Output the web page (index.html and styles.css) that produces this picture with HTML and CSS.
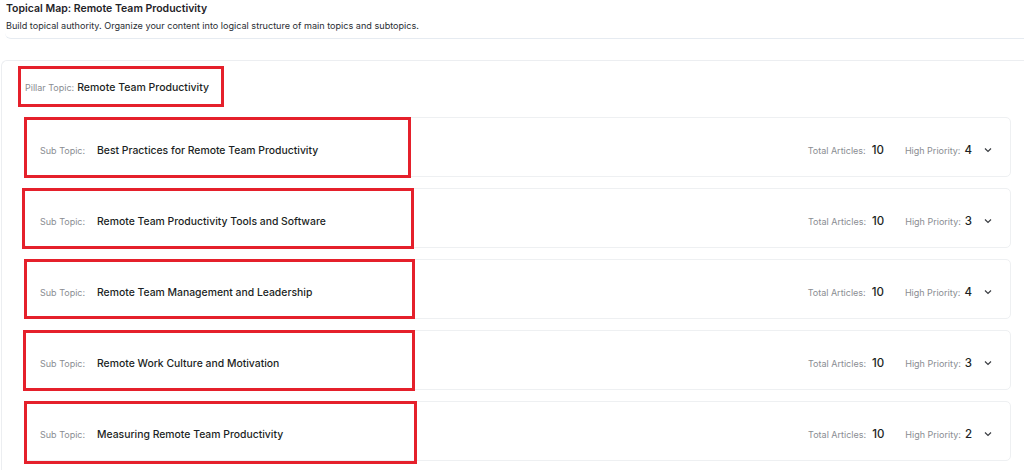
FILE: index.html
```html
<!DOCTYPE html>
<html lang="en">

<head>
    <meta charset="UTF-8">
    <meta name="viewport" content="width=device-width, initial-scale=1.0">
    <title>Topical Map</title>
    <link rel="stylesheet" href="styles.css">
</head>

<body>

    <header class="page-head">
        <h1>Topical Map: Remote Team Productivity</h1>
        <p>Build topical authority. Organize your content into logical structure of main topics and subtopics.</p>
    </header>

    <div class="map-card">
        <div class="pillar">
            <span class="label">Pillar Topic:</span>
            <span class="pillar-name">Remote Team Productivity</span>
            <span class="mark"></span>
        </div>

        <div class="sub-list">
            <div class="sub-card">
                <div class="sub-main">
                    <span class="label sub-label">Sub Topic:</span>
                    <span class="sub-name">Best Practices for Remote Team Productivity</span>
                </div>
                <div class="sub-stats">
                    <span class="label">Total Articles:</span><span class="val total">10</span>
                    <span class="label stat-gap">High Priority:</span><span class="val">4</span>
                    <svg class="chevron" viewBox="0 0 10 10"><polyline points="2,3.5 5,6.5 8,3.5" /></svg>
                </div>
                <span class="mark mark-1"></span>
            </div>

            <div class="sub-card">
                <div class="sub-main">
                    <span class="label sub-label">Sub Topic:</span>
                    <span class="sub-name">Remote Team Productivity Tools and Software</span>
                </div>
                <div class="sub-stats">
                    <span class="label">Total Articles:</span><span class="val total">10</span>
                    <span class="label stat-gap">High Priority:</span><span class="val">3</span>
                    <svg class="chevron" viewBox="0 0 10 10"><polyline points="2,3.5 5,6.5 8,3.5" /></svg>
                </div>
                <span class="mark mark-2"></span>
            </div>

            <div class="sub-card">
                <div class="sub-main">
                    <span class="label sub-label">Sub Topic:</span>
                    <span class="sub-name">Remote Team Management and Leadership</span>
                </div>
                <div class="sub-stats">
                    <span class="label">Total Articles:</span><span class="val total">10</span>
                    <span class="label stat-gap">High Priority:</span><span class="val">4</span>
                    <svg class="chevron" viewBox="0 0 10 10"><polyline points="2,3.5 5,6.5 8,3.5" /></svg>
                </div>
                <span class="mark mark-3"></span>
            </div>

            <div class="sub-card">
                <div class="sub-main">
                    <span class="label sub-label">Sub Topic:</span>
                    <span class="sub-name">Remote Work Culture and Motivation</span>
                </div>
                <div class="sub-stats">
                    <span class="label">Total Articles:</span><span class="val total">10</span>
                    <span class="label stat-gap">High Priority:</span><span class="val">3</span>
                    <svg class="chevron" viewBox="0 0 10 10"><polyline points="2,3.5 5,6.5 8,3.5" /></svg>
                </div>
                <span class="mark mark-4"></span>
            </div>

            <div class="sub-card">
                <div class="sub-main">
                    <span class="label sub-label">Sub Topic:</span>
                    <span class="sub-name">Measuring Remote Team Productivity</span>
                </div>
                <div class="sub-stats">
                    <span class="label">Total Articles:</span><span class="val total">10</span>
                    <span class="label stat-gap">High Priority:</span><span class="val">2</span>
                    <svg class="chevron" viewBox="0 0 10 10"><polyline points="2,3.5 5,6.5 8,3.5" /></svg>
                </div>
                <span class="mark mark-5"></span>
            </div>
        </div>
    </div>

</body>

</html>
```

FILE: styles.css
```css
* {
    box-sizing: border-box;
    font-family: Inter, "Noto Sans", sans-serif;
}

body {
    margin: 0;
    padding: 0;
    background-color: #ffffff;
    color: #1c1f24;
    overflow: hidden;
}

/* page header */
.page-head {
    margin-left: 5px;
    padding: 1px 0 6px 1px;
    border-bottom: 1px solid #e6ebf1;
    border-bottom-left-radius: 6px;
}

.page-head h1 {
    margin: 0;
    font-size: 10.5px;
    font-weight: 600;
    line-height: 15px;
    color: #1f2328;
}

.page-head p {
    margin: 3px 0 0;
    font-size: 9.1px;
    line-height: 13px;
    color: #2a2e33;
}

/* main card */
.map-card {
    margin: 21px 0 0 1px;
    padding: 5px 13px 10px 16px;
    border: 1px solid #eceef1;
    border-right: none;
    border-top-left-radius: 6px;
}

.pillar {
    position: relative;
    display: inline-flex;
    align-items: center;
    gap: 3px;
    height: 41px;
    padding: 2px 0 0 7px;
    width: 206px;
}

.label {
    font-size: 9px;
    color: #8a8d92;
}

.pillar-name {
    font-size: 10.5px;
    font-weight: 500;
    color: #1c1f24;
}

.sub-list {
    display: flex;
    flex-direction: column;
    gap: 11px;
    margin: 10px 0 0 6px;
}

.sub-card {
    position: relative;
    display: flex;
    align-items: center;
    justify-content: space-between;
    height: 60px;
    padding: 6px 17px 0 15px;
    border: 1px solid #eef0f2;
    border-radius: 5px;
}

.sub-main {
    display: flex;
    align-items: center;
}

.sub-label {
    width: 57px;
}

.sub-name {
    font-size: 10.4px;
    font-weight: 500;
    color: #1c1f24;
}

.sub-stats {
    display: flex;
    align-items: center;
}

.val {
    margin-left: 4px;
    font-size: 11.5px;
    font-weight: 500;
    color: #1c1f24;
}

.val.total {
    margin-left: 6px;
}

.stat-gap {
    margin-left: 21px;
}

.chevron {
    width: 10px;
    height: 10px;
    margin-left: 11px;
    fill: none;
    stroke: #3a3d42;
    stroke-width: 1.2;
}

/* red annotation boxes */
.mark {
    position: absolute;
    border: 3px solid #e5202b;
    pointer-events: none;
}

.pillar .mark {
    left: 0;
    top: 0;
    width: 206px;
    height: 41px;
}

.mark-1 {
    left: -1px;
    top: -1px;
    width: 387px;
    height: 61px;
}

.mark-2 {
    left: -3px;
    top: -1px;
    width: 392px;
    height: 61px;
}

.mark-3 {
    left: -1px;
    top: -1px;
    width: 391px;
    height: 60px;
}

.mark-4 {
    left: -2px;
    top: -1px;
    width: 392px;
    height: 61px;
}

.mark-5 {
    left: -1px;
    top: -1px;
    width: 393px;
    height: 63px;
}
```
